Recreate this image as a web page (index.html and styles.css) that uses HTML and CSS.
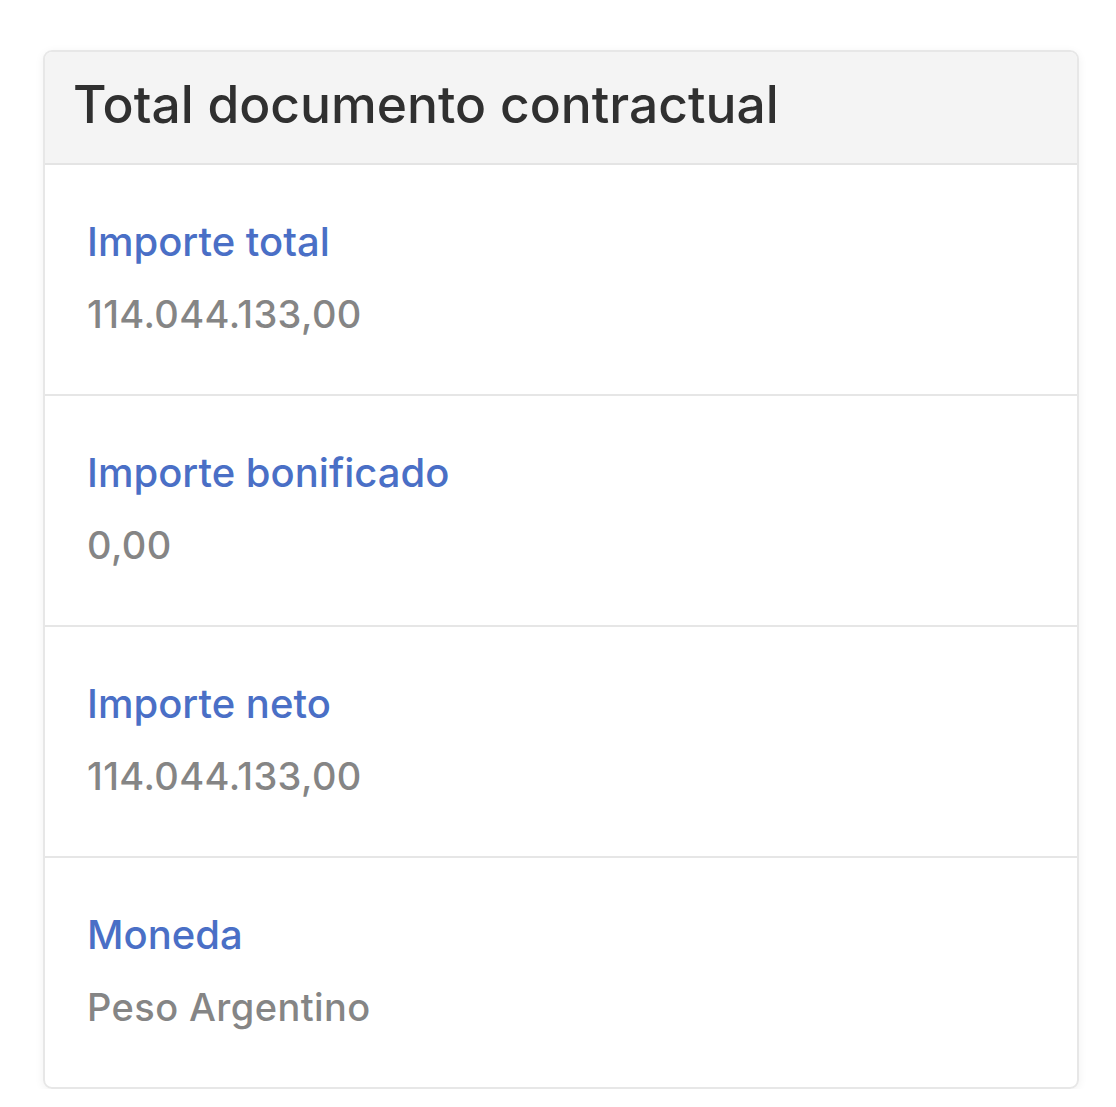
FILE: index.html
```html
<!DOCTYPE html>
<html lang="es">
<head>
    <meta charset="UTF-8">
    <meta name="viewport" content="width=device-width, initial-scale=1.0">
    <title>Total documento contractual</title>
    <link rel="stylesheet" href="styles.css">
</head>
<body>
    <div class="card">
        <div class="card-header">
            <h2 class="card-title">Total documento contractual</h2>
        </div>
        <div class="row">
            <div class="row-label">Importe total</div>
            <div class="row-value">114.044.133,00</div>
        </div>
        <div class="row">
            <div class="row-label">Importe bonificado</div>
            <div class="row-value">0,00</div>
        </div>
        <div class="row">
            <div class="row-label">Importe neto</div>
            <div class="row-value">114.044.133,00</div>
        </div>
        <div class="row">
            <div class="row-label">Moneda</div>
            <div class="row-value">Peso Argentino</div>
        </div>
    </div>
</body>
</html>
```

FILE: styles.css
```css
body{
    margin: 0;
    background: #fff;
    font-family: 'Inter', 'Noto Sans', sans-serif;
    padding: 50px 37px 0 43px;
}
.card{
    border: 2px solid #e7e7e7;
    border-radius: 9px;
    overflow: hidden;
    box-shadow: 0 2px 10px rgba(0, 0, 0, 0.06);
}
.card-header{
    background: #f4f4f4;
    padding: 26px 28px 33px;
    border-bottom: 2px solid #e4e4e4;
}
.card-title{
    margin: 0;
    font-size: 51.5px;
    line-height: 52px;
    font-weight: 500;
    color: #303030;
}
.row{
    padding: 57px 42px 61px;
    border-bottom: 2px solid #e6e6e6;
}
.row:last-child{
    border-bottom: none;
}
.row-label{
    color: #4a6fc6;
    font-size: 40px;
    line-height: 40px;
    font-weight: 500;
}
.row-value{
    color: #858585;
    font-size: 38px;
    line-height: 37px;
    letter-spacing: 0.4px;
    font-weight: 500;
    margin-top: 34px;
}
```
